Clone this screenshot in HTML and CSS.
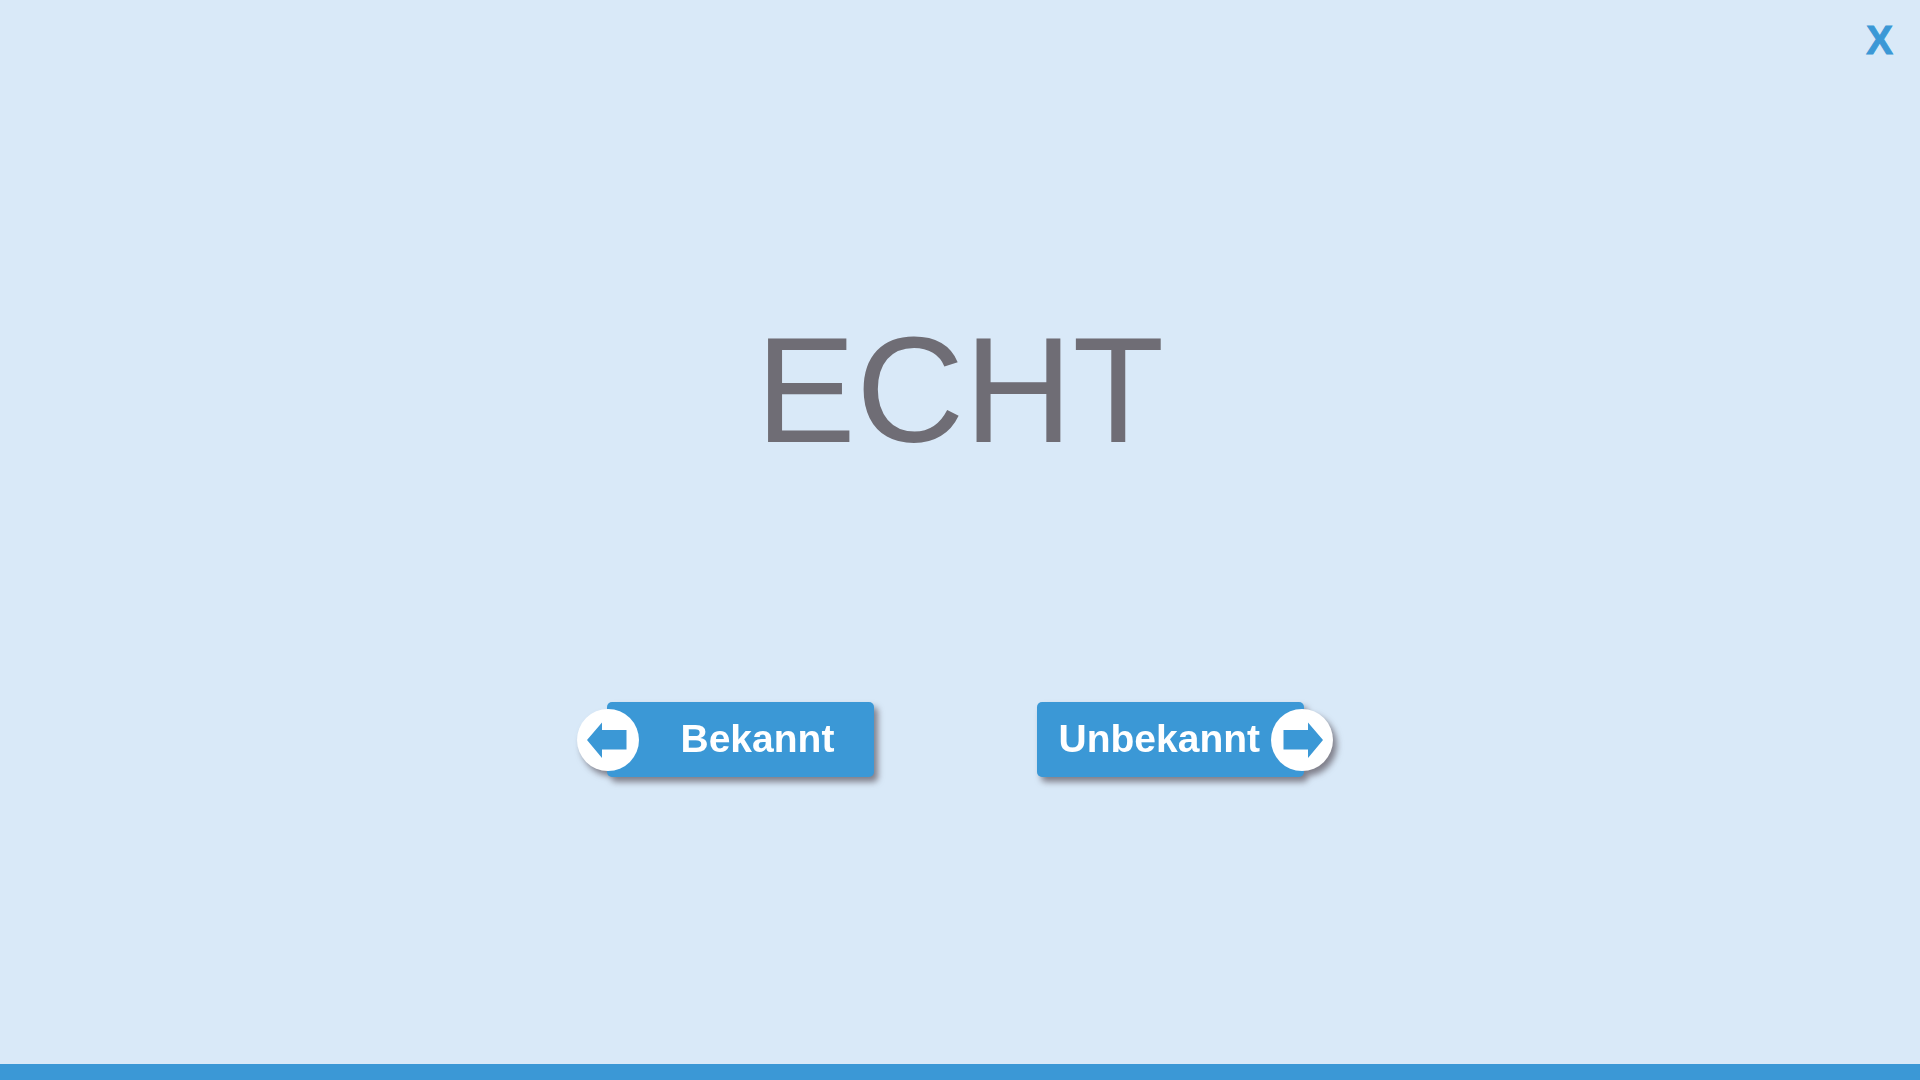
FILE: index.html
```
<!DOCTYPE html>
<html lang="de">
<head>
  <meta charset="UTF-8">
  <meta name="viewport" content="width=device-width, initial-scale=1">
  <title>Wortschatz</title>
  <link rel="stylesheet" href="styles.css">
</head>
<body>
  <header class="topbar">
    <button type="button" class="close" aria-label="Schließen">X</button>
  </header>

  <main class="card">
    <h1 class="word">ECHT</h1>
    <div class="answers">
      <!-- Word is known -->
      <button type="button" class="answer known">
        <span>Bekannt</span>
        <svg class="arrow" viewBox="0 0 62 62" aria-hidden="true">
          <circle cx="31" cy="31" r="31"/>
          <path d="M10 31 L25 13.5 V21 H49.5 V40.5 H25 V49 Z"/>
        </svg>
      </button>
      <!-- Word is unknown -->
      <button type="button" class="answer unknown">
        <span>Unbekannt</span>
        <svg class="arrow" viewBox="0 0 62 62" aria-hidden="true">
          <circle cx="31" cy="31" r="31"/>
          <path d="M52 31 L37 13.5 V21 H12.5 V40.5 H37 V49 Z"/>
        </svg>
      </button>
    </div>
  </main>

  <footer class="bottombar"></footer>
</body>
</html>
```

FILE: styles.css
```
* {
  box-sizing: border-box;
}
body {
  margin: 0;
  min-height: 100vh;
  display: flex;
  flex-direction: column;
  background-color: #d9e9f8;
  font-family: Arial, "Liberation Sans", sans-serif;
}
button {
  border: none;
  font-family: inherit;
  font-size: 40px;
  font-weight: bold;
  line-height: 40px;
  cursor: pointer;
}
.topbar {
  display: flex;
  justify-content: flex-end;
  padding: 20px 27px;
}
.close {
  padding: 0;
  background: none;
  color: #3b98d6;
  -webkit-text-stroke: 1px #3b98d6;
}
.card {
  flex: 1;
  display: flex;
  flex-direction: column;
  align-items: center;
  gap: 237px;
  padding: 235px 0 40px;
}
.word {
  margin: 0;
  color: #6f6d75;
  font-size: 150px;
  font-weight: normal;
  line-height: 150px;
}
/* Answer buttons with the round arrow hanging over the outer edge */
.answers {
  display: flex;
  gap: 163px;
  padding-right: 10px;
}
/* drop-shadow follows the outline of button and circle together */
.answer {
  position: relative;
  width: 267px;
  height: 75px;
  padding: 0 22px 2px;
  border-radius: 5px;
  background-color: #3b98d6;
  filter: drop-shadow(4px 5px 3px rgba(80, 70, 80, 0.65));
  color: #fff;
  font-size: 39px;
  text-align: left;
}
.known {
  padding-left: 74px;
}
.arrow {
  position: absolute;
  top: 7px;
  width: 62px;
  height: 62px;
}
.known .arrow {
  left: -30px;
}
.unknown .arrow {
  right: -29px;
}
.arrow circle {
  fill: #fff;
}
.arrow path {
  fill: #3b98d6;
}
.bottombar {
  height: 16px;
  background-color: #3b98d6;
}
```
